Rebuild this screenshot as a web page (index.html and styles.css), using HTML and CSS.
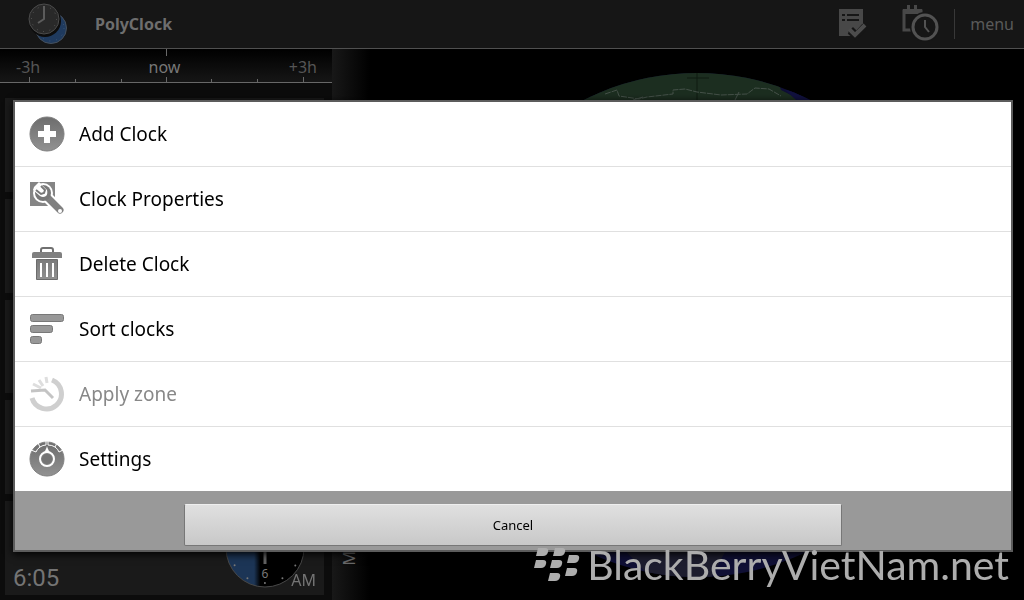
FILE: index.html
```html
<!DOCTYPE html>
<html lang="en">
<head>
    <meta charset="UTF-8">
    <meta name="viewport" content="width=device-width, initial-scale=1.0">
    <title>PolyClock</title>
    <link rel="stylesheet" href="styles.css">
</head>
<body>

    <div class="app">
        <header class="header">
            <svg class="logo" viewBox="0 0 40 42" width="40" height="42">
                <circle cx="23" cy="25" r="15.500" fill="#1f3a5e" stroke="#46505c"/>
                <circle cx="23" cy="25" r="13" fill="none" stroke="#3d5878" stroke-dasharray="1 6"/>
                <circle cx="17" cy="18" r="16" fill="#0d0d0d"/>
                <circle cx="16" cy="16" r="15" fill="#292929" stroke="#4b4b4b"/>
                <circle cx="16" cy="16" r="12.500" fill="none" stroke="#5a5a5a" stroke-dasharray="1 5.500"/>
                <path d="M16 3v13l-6 4" fill="none" stroke="#5c5c5c" stroke-width="2"/>
            </svg>
            <h1 class="title">PolyClock</h1>
            <button class="tool" type="button" aria-label="Tasks">
                <svg viewBox="0 0 30 32" width="30" height="32">
                    <path d="M1 1h24v16l-6 6-4-4-5 5 4 4H1z" fill="#484848"/>
                    <path d="M4 7h3M4 12h3M9 7h12M9 12h12" stroke="#161616" stroke-width="2"/>
                    <path d="M12 23l6 5 9-10" fill="none" stroke="#161616" stroke-width="7"/>
                    <path d="M11 21l6 6 10-10" fill="none" stroke="#4c4c4c" stroke-width="4"/>
                </svg>
            </button>
            <button class="tool" type="button" aria-label="Schedule">
                <svg viewBox="0 0 38 38" width="38" height="38">
                    <path d="M2 6h17v19H2z" fill="none" stroke="#484848" stroke-width="3"/>
                    <path d="M1 4h19v5H1zM5 0h3v5H5zM12 0h3v5h-3z" fill="#484848"/>
                    <circle cx="23" cy="22" r="15" fill="#161616"/>
                    <circle cx="23" cy="22" r="12" fill="#161616" stroke="#525252" stroke-width="3"/>
                    <path d="M23 15v7l4 5" fill="none" stroke="#525252" stroke-width="2"/>
                </svg>
            </button>
            <button class="menu-button" type="button">menu</button>
        </header>

        <main class="main">
            <section class="clocks">
                <div class="ruler">
                    <svg class="ticks" viewBox="0 0 332 34" width="332" height="34">
                        <path d="M166.500 0v7M29.500 28v5M166.500 28v5M303.500 28v5M75.500 30v3M121.500 30v3M211.500 30v3M257.500 30v3" stroke="#686868"/>
                    </svg>
                    <span>-3h</span>
                    <span class="now">now</span>
                    <span>+3h</span>
                </div>
                <div class="clock-list">
                    <div class="clock-card"></div>
                    <div class="clock-card"></div>
                    <div class="clock-card"></div>
                    <div class="clock-card"></div>
                    <div class="clock-card">
                        <span class="time">6:05</span>
                        <svg class="dial" viewBox="0 0 80 80" width="80" height="80">
                            <defs>
                                <linearGradient id="day">
                                    <stop offset="0" stop-color="#1c3556"/>
                                    <stop offset="0.360" stop-color="#1c3556"/>
                                    <stop offset="0.440" stop-color="#000"/>
                                </linearGradient>
                            </defs>
                            <circle cx="40" cy="40" r="39" fill="url(#day)" stroke="#484848"/>
                            <circle cx="40" cy="40" r="35" fill="none" stroke="#777" stroke-width="2" stroke-linecap="round" stroke-dasharray="0 18.326"/>
                            <path d="M40 20v36" stroke="#626262" stroke-width="3"/>
                            <text x="40" y="70" class="dial-number">6</text>
                        </svg>
                        <span class="ampm">AM</span>
                    </div>
                </div>
            </section>

            <div class="map-handle"><span>M</span></div>

            <section class="map">
                <svg class="globe" viewBox="0 0 504 506" width="504" height="506">
                    <defs>
                        <clipPath id="disc"><circle cx="252" cy="253" r="252"/></clipPath>
                    </defs>
                    <g clip-path="url(#disc)">
                        <rect width="504" height="506" fill="#0f0f34"/>
                        <path d="M90 0h240l6 18 24 12 4 60H90z" fill="#1c2e20"/>
                        <path d="M340 18q20 0 40 16l-20 2z" fill="#11113f"/>
                        <path d="M172 470h48l60 10-14 26h-60z" fill="#1d1d2e"/>
                        <path d="M252 1v40M242 6h22M212 30l-14 12" stroke="#0f1a10" fill="none"/>
                        <path d="M160 22l12-4 2 6 20 3 8-2 26-3v-4l12-1 12 3 24 3 26-1 8-6 14 1 12 7" fill="none" stroke="#46524a" stroke-dasharray="6 1"/>
                        <path d="M188 28l10-3M290 28l4-8" fill="none" stroke="#46524a"/>
                    </g>
                </svg>
            </section>
        </main>
    </div>

    <!-- Options dialog -->
    <div class="overlay">
        <div class="dialog" role="dialog" aria-label="Options">
            <!-- shared icon gradient -->
            <svg class="defs" width="0" height="0">
                <linearGradient id="metal" gradientUnits="userSpaceOnUse" x1="0" y1="0" x2="0" y2="36">
                    <stop offset="0" stop-color="#6c6c6c"/>
                    <stop offset="1" stop-color="#939393"/>
                </linearGradient>
            </svg>
            <ul class="options">
                <li>
                    <button class="option" type="button">
                        <svg viewBox="0 0 36 36" width="36" height="36">
                            <circle cx="18" cy="18" r="17" fill="url(#metal)" stroke="#808080"/>
                            <path d="M15 9h6v6h6v6h-6v6h-6v-6H9v-6h6z" fill="#fff"/>
                        </svg>
                        Add Clock
                    </button>
                </li>
                <li>
                    <button class="option" type="button">
                        <svg viewBox="0 0 36 36" width="36" height="36">
                            <path d="M1 1h25v24H1z" fill="#858585"/>
                            <circle cx="14" cy="12" r="10" fill="#fff"/>
                            <path d="M16 14l15 15" stroke="#fff" stroke-width="11"/>
                            <path d="M18 16l13 13" stroke="#808080" stroke-width="7" stroke-linecap="round"/>
                            <circle cx="14" cy="12" r="8" fill="#787878"/>
                            <path d="M5 6l5-5 8 8q1 4-1 6-3 2-6 0L4 9z" fill="#fff"/>
                            <path d="M12 5l4 4-1 3-3 1-5-4" fill="none" stroke="#787878" stroke-width="2"/>
                            <circle cx="31" cy="30" r="2" fill="#fff"/>
                        </svg>
                        Clock Properties
                    </button>
                </li>
                <li>
                    <button class="option" type="button">
                        <svg viewBox="0 0 36 36" width="36" height="36">
                            <path d="M12 7V4q0-2 2-2h8q2 0 2 2v3" fill="none" stroke="#707070" stroke-width="2"/>
                            <path d="M5 6h26q2 0 2 2v4H3V8q0-2 2-2z" fill="#808080"/>
                            <path d="M7.500 13.500h21v20h-21z" fill="url(#metal)" stroke="#6c6c6c"/>
                            <path d="M12 17v14M18 17v14M24 17v14" stroke="#fff" stroke-width="2"/>
                        </svg>
                        Delete Clock
                    </button>
                </li>
                <li>
                    <button class="option" type="button">
                        <svg viewBox="0 0 36 36" width="36" height="36">
                            <g fill="#989898" stroke="#787878">
                                <rect x="1.500" y="3.500" width="33" height="7" rx="2"/>
                                <rect x="1.500" y="14.500" width="22" height="7" rx="2"/>
                                <rect x="1.500" y="25.500" width="11" height="7" rx="2"/>
                            </g>
                        </svg>
                        Sort clocks
                    </button>
                </li>
                <li>
                    <button class="option" type="button" disabled>
                        <svg viewBox="0 0 36 36" width="36" height="36">
                            <path d="M23 4A15 15 0 1 1 3 22" fill="none" stroke="#cfcfcf" stroke-width="5"/>
                            <path d="M2 15l14-1 8 8" fill="none" stroke="#c4c4c4" stroke-width="3"/>
                            <path d="M4 8l8 4M10 4l4 6M17 1l1 6" fill="none" stroke="#dedede" stroke-width="3"/>
                        </svg>
                        Apply zone
                    </button>
                </li>
                <li>
                    <button class="option" type="button">
                        <svg viewBox="0 0 36 36" width="36" height="36">
                            <circle cx="18" cy="18" r="17" fill="url(#metal)" stroke="#808080"/>
                            <path d="M2 9l5 2q1-3 4-5l-2-4M11 6q3-2 6-2V0M19 0v4q4 0 7 2l2-4M26 6q3 2 4 5l4-2" fill="none" stroke="#fff"/>
                            <path d="M18 5q1 5 5 8H13q4-3 5-8z" fill="#fff"/>
                            <circle cx="18" cy="18" r="7" fill="#808080" stroke="#fff" stroke-width="2"/>
                            <circle cx="18" cy="18" r="5" fill="#757575"/>
                        </svg>
                        Settings
                    </button>
                </li>
            </ul>
            <div class="dialog-footer">
                <button class="cancel" type="button">Cancel</button>
            </div>
        </div>
    </div>

    <div class="watermark">
        <svg viewBox="0 0 47 34" width="47" height="34">
            <defs>
                <path id="seed" d="M2 0h7q4 0 3 4-1 4-5 4H0z"/>
            </defs>
            <g fill="#adadad">
                <use href="#seed" x="3" y="0"/>
                <use href="#seed" x="20" y="0"/>
                <use href="#seed" x="1" y="12"/>
                <use href="#seed" x="17" y="12"/>
                <use href="#seed" x="34" y="7"/>
                <use href="#seed" x="32" y="20"/>
                <use href="#seed" x="15" y="25"/>
            </g>
        </svg>
        <span>BlackBerryVietNam.net</span>
    </div>

</body>
</html>
```
FILE: styles.css
```css
* {
    box-sizing: border-box;
}
body {
    margin: 0;
    background-color: #000;
    color: #686868;
    font-family: "Noto Sans", "Open Sans", sans-serif;
    overflow: hidden;
}
button {
    border: none;
    background: none;
    padding: 0;
    color: inherit;
    font-family: inherit;
    cursor: pointer;
}
svg {
    display: block;
    flex: none;
}
.app {
    display: flex;
    flex-direction: column;
    height: 100vh;
}

/* Header */
.header {
    display: flex;
    align-items: center;
    height: 49px;
    padding: 0 10px 0 28px;
    background-color: #161616;
    border-bottom: 1px solid #505050;
}
.title {
    flex: 1;
    margin: 0 0 0 27px;
    font-size: 16px;
    font-weight: bold;
    color: #6e6e6e;
}
.tool {
    margin-right: 34px;
}
.tool + .tool {
    margin-right: 14px;
}
.menu-button {
    height: 30px;
    padding-left: 15px;
    border-left: 1px solid #383838;
    font-size: 16px;
    color: #5a5a5a;
}

/* Clock list */
.main {
    display: flex;
    flex: 1;
    min-height: 0;
}
.clocks {
    display: flex;
    flex-direction: column;
    width: 332px;
    background-color: #0c0c0c;
}
.ruler {
    position: relative;
    display: flex;
    justify-content: space-between;
    height: 34px;
    padding: 6px 15px 0 16px;
    border-bottom: 1px solid #686868;
    background: linear-gradient(#000, #161616);
    font-size: 16px;
    line-height: 24px;
    color: #555;
}
.ruler .now {
    color: #777;
}
.ticks {
    position: absolute;
    left: 0;
    top: 0;
}
.clock-list {
    display: flex;
    flex-direction: column;
    gap: 7px;
    padding: 15px 8px 5px 5px;
    flex: 1;
}
.clock-card {
    display: flex;
    flex: 1;
    align-items: flex-end;
    padding: 0 8px 7px;
    background-color: #1a1a1a;
}
.time {
    flex: 1;
    font-family: Roboto, sans-serif;
    font-size: 24px;
    line-height: 20px;
    color: #747474;
}
.dial-number {
    font-size: 12px;
    text-anchor: middle;
    fill: #777;
}
.ampm {
    margin-left: -14px;
    font-size: 16px;
    line-height: 16px;
    color: #747474;
    z-index: 1;
}

/* Map */
.map-handle {
    display: flex;
    align-items: flex-end;
    width: 38px;
    padding: 0 0 34px 6px;
    background: linear-gradient(90deg, #181818, #000);
}
.map-handle span {
    writing-mode: vertical-rl;
    transform: rotate(180deg);
    font-size: 16px;
}
.map {
    display: flex;
    flex: 1;
    justify-content: center;
    padding-top: 23px;
}

/* Dialog */
.overlay {
    position: fixed;
    inset: 0;
    padding: 100px 11px 0 13px;
}
.dialog {
    border: 2px solid #5c5c5c;
    background-color: #fff;
    box-shadow: 0 2px 8px #000;
}
.defs {
    position: absolute;
}
.options {
    margin: 0;
    padding: 0;
    list-style: none;
}
.options li + li {
    border-top: 1px solid #e0e0e0;
}
.option {
    display: flex;
    align-items: center;
    gap: 14px;
    width: 100%;
    height: 64px;
    padding: 0 14px;
    font-size: 19px;
    color: #000;
    text-align: left;
}
.option:disabled {
    color: #888;
    cursor: default;
}
.dialog-footer {
    display: flex;
    justify-content: center;
    padding: 13px 0 4px;
    background-color: #999;
}
.cancel {
    width: 66%;
    height: 42px;
    border: 1px solid #777;
    border-top-color: #eee;
    border-radius: 2px;
    background: linear-gradient(#e0e0e0, #c8c8c8);
    font-size: 13px;
    color: #000;
}

/* Watermark */
.watermark {
    position: fixed;
    right: 15px;
    bottom: 17px;
    display: flex;
    align-items: center;
    gap: 7px;
    font-family: Lato, sans-serif;
    font-size: 41px;
    line-height: 36px;
    color: #adadad;
}
```
